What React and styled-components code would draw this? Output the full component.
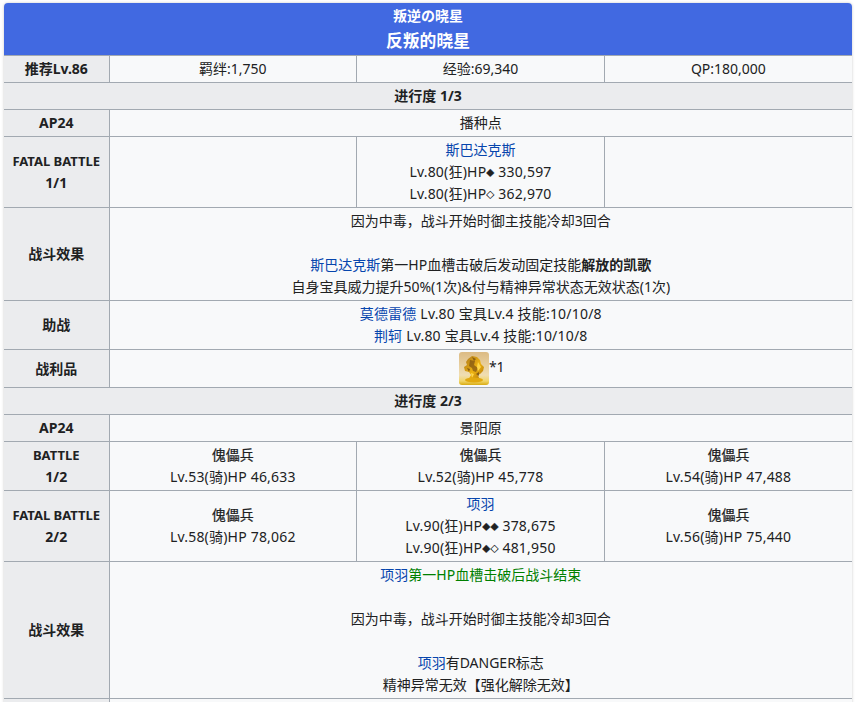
import React from 'react';
import styled, { createGlobalStyle } from 'styled-components';

const GlobalStyle = createGlobalStyle`
  html, body {
    margin: 0;
    height: 702px;
    overflow: hidden;
    background: #ffffff;
  }
  body {
    padding: 3px 4px 0;
    box-sizing: border-box;
    font-family: "Noto Sans", "Noto Sans CJK SC", sans-serif;
    font-size: 14px;
    line-height: 22px;
    color: #202122;
  }
`;

const Table = styled.table`
  width: 848px;
  table-layout: fixed;
  border-collapse: collapse;
  background: #f8f9fa;
  text-align: center;
  border-radius: 4px 4px 0 0;
  box-shadow: 0 0 3px rgba(0, 0, 0, 0.22);
`;

const Banner = styled.th`
  height: 52px;
  padding: 0;
  vertical-align: top;
  background: royalblue;
  color: #ffffff;
  border-radius: 4px 4px 0 0;
  font-weight: 700;
`;

const BannerSub = styled.div`
  font-size: 14px;
  line-height: 26px;
`;

const BannerMain = styled.div`
  font-size: 16.8px;
  line-height: 24px;
`;

const Head = styled.th`
  padding: 2px 4px;
  border: 1px solid #a2a9b1;
  border-left: 0;
  border-right: ${(p) => (p.$full ? '0' : '1px solid #a2a9b1')};
  background: #ebecee;
  font-weight: 700;
`;

const BattleName = styled.div`
  font-size: ${(p) => (p.$small ? '13px' : '14px')};
`;

const Cell = styled.td`
  padding: 2px 4px;
  border: 1px solid #a2a9b1;
  border-right: 0;
  vertical-align: middle;
`;

const Name = styled.div`
  -webkit-text-stroke: 0.2px currentColor;
`;

const Stats = styled.div`
  letter-spacing: 0.2px;
`;

const Link = styled.a`
  color: #0645ad;
  text-decoration: none;
`;

const Green = styled.span`
  color: #008000;
`;

const Strong = styled.b`
  font-weight: 700;
`;

const Gem = styled.span`
  font-size: 8px;
  line-height: 1;
  vertical-align: 1px;
  -webkit-text-stroke: 0.25px currentColor;
`;

const Drop = styled.div`
  display: flex;
  justify-content: center;
  align-items: center;
  padding-left: 2px;
`;

const Count = styled.span`
  margin-bottom: 3px;
`;

const GoldStatue = () => (
  <svg width="30" height="33" viewBox="0 0 30 33" style={{ display: 'block' }}>
    <defs>
      <linearGradient id="statueBg" x1="0" y1="0" x2="0" y2="1">
        <stop offset="0" stopColor="#dcbb84" />
        <stop offset="0.7" stopColor="#f0deb2" />
        <stop offset="0.88" stopColor="#f1d568" />
        <stop offset="1" stopColor="#d9ab12" />
      </linearGradient>
      <linearGradient id="statueGold" x1="0" y1="0" x2="1" y2="1">
        <stop offset="0" stopColor="#a9741c" />
        <stop offset="0.55" stopColor="#eeb312" />
        <stop offset="1" stopColor="#a86c08" />
      </linearGradient>
    </defs>
    <rect width="30" height="33" rx="3" fill="url(#statueBg)" />
    <path d="M9 7l4-3 5 1 3 3 1 4 3 3-1 4-3 3-2 1 1 3 2 2H9l3-5-2-3-4-1-1-4 3-2-1-3z" fill="url(#statueGold)" />
    <path d="M11 8l5 1-1 4 4 3-2 4-3-1-1-3-3-2z" fill="#7d5212" opacity="0.7" />
    <path d="M13 5l4 2-2 2zM8 16l3 1-1 3zM17 22l3-2 0 4z" fill="#6f4a14" opacity="0.75" />
    <path d="M19 10l3 5-3 4-1-4zM12 21l3 1-2 4z" fill="#ffd84a" />
    <ellipse cx="15" cy="28" rx="9" ry="2.6" fill="#e2a90f" />
  </svg>
);

const Enemy = ({ name, lines, link }) => (
  <Cell>
    {link ? <Link href="#">{name}</Link> : <Name>{name}</Name>}
    {lines.map((l) => (
      <Stats key={l.hp}>
        {l.stats}
        {l.gems && <Gem>{l.gems}</Gem>} {l.hp}
      </Stats>
    ))}
  </Cell>
);

const App = () => (
  <>
    <GlobalStyle />
    <Table>
      <colgroup>
        <col style={{ width: 105 }} />
        <col />
        <col />
        <col />
      </colgroup>
      <tbody>
        <tr>
          <Banner colSpan={4}>
            <BannerSub>叛逆の晓星</BannerSub>
            <BannerMain>反叛的晓星</BannerMain>
          </Banner>
        </tr>
        <tr>
          <Head>推荐Lv.86</Head>
          <Cell>羁绊:1,750</Cell>
          <Cell>经验:69,340</Cell>
          <Cell>QP:180,000</Cell>
        </tr>
        <tr>
          <Head $full colSpan={4}>进行度 1/3</Head>
        </tr>
        <tr>
          <Head>AP24</Head>
          <Cell colSpan={3}>播种点</Cell>
        </tr>
        <tr>
          <Head>
            <BattleName $small>FATAL BATTLE</BattleName>
            <BattleName>1/1</BattleName>
          </Head>
          <Cell />
          <Enemy
            link
            name="斯巴达克斯"
            lines={[
              { stats: 'Lv.80(狂)HP', gems: '◆', hp: '330,597' },
              { stats: 'Lv.80(狂)HP', gems: '◇', hp: '362,970' },
            ]}
          />
          <Cell />
        </tr>
        <tr>
          <Head>战斗效果</Head>
          <Cell colSpan={3}>
            <div>因为中毒，战斗开始时御主技能冷却3回合</div>
            <br />
            <div>
              <Link href="#">斯巴达克斯</Link>第一HP血槽击破后发动固定技能<Strong>解放的凯歌</Strong>
            </div>
            <div>自身宝具威力提升50%(1次)&amp;付与精神异常状态无效状态(1次)</div>
          </Cell>
        </tr>
        <tr>
          <Head>助战</Head>
          <Cell colSpan={3}>
            <Stats>
              <Link href="#">莫德雷德</Link> Lv.80 宝具Lv.4 技能:10/10/8
            </Stats>
            <Stats>
              <Link href="#">荆轲</Link> Lv.80 宝具Lv.4 技能:10/10/8
            </Stats>
          </Cell>
        </tr>
        <tr>
          <Head>战利品</Head>
          <Cell colSpan={3}>
            <Drop>
              <GoldStatue />
              <Count>*1</Count>
            </Drop>
          </Cell>
        </tr>
        <tr>
          <Head $full colSpan={4}>进行度 2/3</Head>
        </tr>
        <tr>
          <Head>AP24</Head>
          <Cell colSpan={3}>景阳原</Cell>
        </tr>
        <tr>
          <Head>
            <BattleName $small>BATTLE</BattleName>
            <BattleName>1/2</BattleName>
          </Head>
          <Enemy name="傀儡兵" lines={[{ stats: 'Lv.53(骑)HP', hp: '46,633' }]} />
          <Enemy name="傀儡兵" lines={[{ stats: 'Lv.52(骑)HP', hp: '45,778' }]} />
          <Enemy name="傀儡兵" lines={[{ stats: 'Lv.54(骑)HP', hp: '47,488' }]} />
        </tr>
        <tr>
          <Head>
            <BattleName $small>FATAL BATTLE</BattleName>
            <BattleName>2/2</BattleName>
          </Head>
          <Enemy name="傀儡兵" lines={[{ stats: 'Lv.58(骑)HP', hp: '78,062' }]} />
          <Enemy
            link
            name="项羽"
            lines={[
              { stats: 'Lv.90(狂)HP', gems: '◆◆', hp: '378,675' },
              { stats: 'Lv.90(狂)HP', gems: '◆◇', hp: '481,950' },
            ]}
          />
          <Enemy name="傀儡兵" lines={[{ stats: 'Lv.56(骑)HP', hp: '75,440' }]} />
        </tr>
        <tr>
          <Head>战斗效果</Head>
          <Cell colSpan={3}>
            <div>
              <Link href="#">项羽</Link>
              <Green>第一HP血槽击破后战斗结束</Green>
            </div>
            <br />
            <div>因为中毒，战斗开始时御主技能冷却3回合</div>
            <br />
            <div>
              <Link href="#">项羽</Link>有DANGER标志
            </div>
            <div>精神异常无效【强化解除无效】</div>
          </Cell>
        </tr>
        <tr>
          <Head>&nbsp;</Head>
          <Cell colSpan={3}>&nbsp;</Cell>
        </tr>
      </tbody>
    </Table>
  </>
);

export default App;
